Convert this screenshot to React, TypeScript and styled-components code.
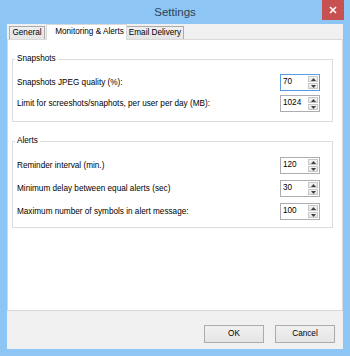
import React from "react";
import styled, { createGlobalStyle } from "styled-components";

const Global = createGlobalStyle`
  html, body { margin: 0; padding: 0; }
  body { font-family: "Liberation Sans", Arial, sans-serif; font-size: 8.2px; color: #000; }
`;

const Win = styled.div`
  width: 350px;
  height: 356px;
  background: #8dc5f4;
  display: flex;
  flex-direction: column;
  box-sizing: border-box;
`;

const TitleBar = styled.div`
  height: 24px;
  display: grid;
  grid-template-columns: 1fr auto 1fr;
  align-items: start;
`;

const Title = styled.div`
  grid-column: 2;
  font-size: 11.5px;
  line-height: 24px;
  color: #2f4256;
`;

const Close = styled.div`
  grid-column: 3;
  justify-self: end;
  margin-right: 6px;
  width: 22px;
  height: 20px;
  background: #c75050;
  display: flex;
  align-items: center;
  justify-content: center;
`;

const Client = styled.div`
  flex: 1;
  margin: 0 7px 7px 7px;
  background: #f0f0f0;
  display: flex;
  flex-direction: column;
`;

const TabStrip = styled.div`
  height: 15px;
  display: flex;
  align-items: flex-end;
  padding-left: 2px;
`;

const Tab = styled.div<{ $active?: boolean; $w: number }>`
  position: relative;
  box-sizing: border-box;
  width: ${(p) => p.$w}px;
  height: ${(p) => (p.$active ? 16 : 13)}px;
  margin-bottom: ${(p) => (p.$active ? -1 : 0)}px;
  margin-left: ${(p) => (p.$active ? 1 : -1)}px;
  z-index: ${(p) => (p.$active ? 2 : 1)};
  border: 1px solid ${(p) => (p.$active ? "#d9d9d9" : "#acacac")};
  border-bottom: none;
  background: ${(p) => (p.$active ? "#fff" : "linear-gradient(#f0f0f0, #e5e5e5)")};
  display: flex;
  align-items: center;
  justify-content: center;
  padding-left: ${(p) => (p.$active ? 6 : 0)}px;
  line-height: 1;
  &:first-child { margin-left: 0; }
`;

const Panel = styled.div`
  flex: 1;
  border: 1px solid #d9d9d9;
  background: #fff;
  padding: 14px 9px 0 4px;
  display: flex;
  flex-direction: column;
  gap: 14px;
`;

const Group = styled.fieldset<{ $pt: number; $pb: number; $gap: number }>`
  margin: 0;
  border: 1px solid #dcdcdc;
  padding: ${(p) => p.$pt}px 12px ${(p) => p.$pb}px 4px;
  display: flex;
  flex-direction: column;
  gap: ${(p) => p.$gap}px;
  min-width: 0;
`;

const Legend = styled.legend`
  padding: 0 2px;
  margin-left: -2px;
  line-height: 10px;
  font-size: 8.2px;
`;

const Row = styled.div`
  display: flex;
  align-items: center;
  justify-content: space-between;
  height: 17px;
`;

const Label = styled.span`
  white-space: nowrap;
`;

const Spin = styled.div<{ $focus?: boolean }>`
  box-sizing: border-box;
  width: 40px;
  height: 17px;
  border: 1px solid ${(p) => (p.$focus ? "#569de5" : "#abadb3")};
  background: #fff;
  display: flex;
  align-items: center;
  justify-content: space-between;
  padding: 0 1px 0 2px;
`;

const SpinValue = styled.span`
  line-height: 1;
`;

const SpinButtons = styled.div`
  width: 10px;
  height: 13px;
  display: flex;
  flex-direction: column;
  gap: 1px;
`;

const SpinBtn = styled.div`
  flex: 1;
  box-sizing: border-box;
  border: 1px solid #c8c8c8;
  background: linear-gradient(#f4f4f4, #e3e3e3);
  display: flex;
  align-items: center;
  justify-content: center;
`;

const Footer = styled.div`
  height: 38px;
  box-sizing: border-box;
  padding: 14px 8px 0 0;
  display: flex;
  justify-content: flex-end;
  align-items: flex-start;
  gap: 11px;
`;

const Button = styled.div`
  box-sizing: border-box;
  width: 60px;
  height: 18px;
  border: 1px solid #acacac;
  background: linear-gradient(#f0f0f0, #e5e5e5);
  display: flex;
  align-items: center;
  justify-content: center;
  line-height: 1;
`;

const Arrow = ({ up }: { up?: boolean }) => (
  <svg width="5" height="3" viewBox="0 0 5 3">
    <polygon points={up ? "0,3 5,3 2.5,0" : "0,0 5,0 2.5,3"} fill="#404040" />
  </svg>
);

const Spinner = ({ value, focus }: { value: string; focus?: boolean }) => (
  <Spin $focus={focus}>
    <SpinValue>{value}</SpinValue>
    <SpinButtons>
      <SpinBtn>
        <Arrow up />
      </SpinBtn>
      <SpinBtn>
        <Arrow />
      </SpinBtn>
    </SpinButtons>
  </Spin>
);

export default function App() {
  return (
    <>
      <Global />
      <Win>
        <TitleBar>
          <Title>Settings</Title>
          <Close>
            <svg width="8" height="8" viewBox="0 0 8 8">
              <path d="M1 1 L7 7 M7 1 L1 7" stroke="#fff" strokeWidth="1.6" />
            </svg>
          </Close>
        </TitleBar>
        <Client>
          <TabStrip>
            <Tab $w={36}>General</Tab>
            <Tab $active $w={81}>Monitoring &amp; Alerts</Tab>
            <Tab $w={58}>Email Delivery</Tab>
          </TabStrip>
          <Panel>
            <Group $pt={10} $pb={9} $gap={4}>
              <Legend>Snapshots</Legend>
              <Row>
                <Label>Snapshots JPEG quality (%):</Label>
                <Spinner value="70" focus />
              </Row>
              <Row>
                <Label>Limit for screeshots/snaphots, per user per day (MB):</Label>
                <Spinner value="1024" />
              </Row>
            </Group>
            <Group $pt={11} $pb={7} $gap={6}>
              <Legend>Alerts</Legend>
              <Row>
                <Label>Reminder interval (min.)</Label>
                <Spinner value="120" />
              </Row>
              <Row>
                <Label>Minimum delay between equal alerts (sec)</Label>
                <Spinner value="30" />
              </Row>
              <Row>
                <Label>Maximum number of symbols in alert message:</Label>
                <Spinner value="100" />
              </Row>
            </Group>
          </Panel>
          <Footer>
            <Button>OK</Button>
            <Button>Cancel</Button>
          </Footer>
        </Client>
      </Win>
    </>
  );
}
